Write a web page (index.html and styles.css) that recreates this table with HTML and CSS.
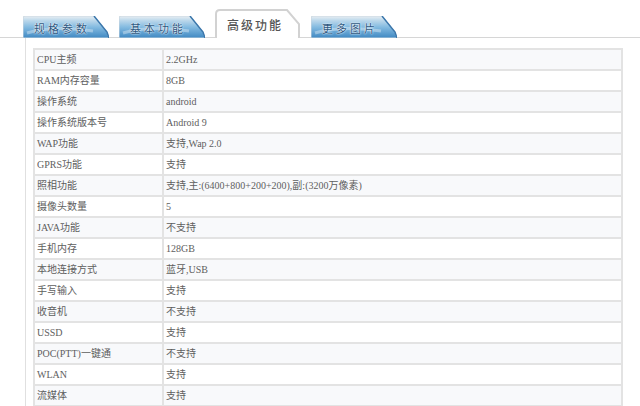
FILE: index.html
```html
<!DOCTYPE html>
<html lang="zh-CN">
<head>
<meta charset="utf-8">
<title>高级功能</title>
<link rel="stylesheet" href="styles.css">
</head>
<body>
<div class="page">
  <div class="tabs">
    <div class="tab tab-blue">
      <svg class="tab-bg" width="86" height="22" viewBox="0 0 86 22">
        <defs>
          <linearGradient id="gb1" x1="0" y1="0" x2="0" y2="1">
            <stop offset="0" stop-color="#e9eff3"/>
            <stop offset="0.2" stop-color="#bcd8eb"/>
            <stop offset="0.5" stop-color="#84bbe1"/>
            <stop offset="1" stop-color="#3f88c2"/>
          </linearGradient>
        </defs>
        <path d="M0 22 V2 Q0 0 2 0 H71 L84 16 L86 22 Z" fill="url(#gb1)" stroke="#c9d6df" stroke-width="1"/>
        <path d="M71 0 L84 16 L86 22" fill="none" stroke="#3a76ab" stroke-width="1.5"/>
        <path d="M4 17 Q30 9 70 15" fill="none" stroke="#ffffff" stroke-opacity="0.35" stroke-width="3"/>
      </svg>
      <span class="tab-label">规格参数</span>
    </div>
    <div class="tab tab-blue">
      <svg class="tab-bg" width="86" height="22" viewBox="0 0 86 22">
        <defs>
          <linearGradient id="gb2" x1="0" y1="0" x2="0" y2="1">
            <stop offset="0" stop-color="#e9eff3"/>
            <stop offset="0.2" stop-color="#bcd8eb"/>
            <stop offset="0.5" stop-color="#84bbe1"/>
            <stop offset="1" stop-color="#3f88c2"/>
          </linearGradient>
        </defs>
        <path d="M0 22 V2 Q0 0 2 0 H71 L84 16 L86 22 Z" fill="url(#gb2)" stroke="#c9d6df" stroke-width="1"/>
        <path d="M71 0 L84 16 L86 22" fill="none" stroke="#3a76ab" stroke-width="1.5"/>
        <path d="M4 17 Q30 9 70 15" fill="none" stroke="#ffffff" stroke-opacity="0.35" stroke-width="3"/>
      </svg>
      <span class="tab-label">基本功能</span>
    </div>
    <div class="tab tab-active">
      <svg class="tab-bg" width="86" height="29" viewBox="0 0 86 29">
        <path d="M1 29 V5 Q1 1 5 1 H72 L84 15 V29" fill="#ffffff" stroke="#d2d2d2" stroke-width="2"/>
      </svg>
      <span class="tab-label">高级功能</span>
    </div>
    <div class="tab tab-blue">
      <svg class="tab-bg" width="86" height="22" viewBox="0 0 86 22">
        <defs>
          <linearGradient id="gb4" x1="0" y1="0" x2="0" y2="1">
            <stop offset="0" stop-color="#e9eff3"/>
            <stop offset="0.2" stop-color="#bcd8eb"/>
            <stop offset="0.5" stop-color="#84bbe1"/>
            <stop offset="1" stop-color="#3f88c2"/>
          </linearGradient>
        </defs>
        <path d="M0 22 V2 Q0 0 2 0 H71 L84 16 L86 22 Z" fill="url(#gb4)" stroke="#c9d6df" stroke-width="1"/>
        <path d="M71 0 L84 16 L86 22" fill="none" stroke="#3a76ab" stroke-width="1.5"/>
        <path d="M4 17 Q30 9 70 15" fill="none" stroke="#ffffff" stroke-opacity="0.35" stroke-width="3"/>
      </svg>
      <span class="tab-label">更多图片</span>
    </div>
  </div>
  <div class="panel">
    <table class="spec">
      <tr><td class="k">CPU主频</td><td>2.2GHz</td></tr>
      <tr><td class="k">RAM内存容量</td><td>8GB</td></tr>
      <tr><td class="k">操作系统</td><td>android</td></tr>
      <tr><td class="k">操作系统版本号</td><td>Android 9</td></tr>
      <tr><td class="k">WAP功能</td><td>支持,Wap 2.0</td></tr>
      <tr><td class="k">GPRS功能</td><td>支持</td></tr>
      <tr><td class="k">照相功能</td><td>支持,主:(6400+800+200+200),副:(3200万像素)</td></tr>
      <tr><td class="k">摄像头数量</td><td>5</td></tr>
      <tr><td class="k">JAVA功能</td><td>不支持</td></tr>
      <tr><td class="k">手机内存</td><td>128GB</td></tr>
      <tr><td class="k">本地连接方式</td><td>蓝牙,USB</td></tr>
      <tr><td class="k">手写输入</td><td>支持</td></tr>
      <tr><td class="k">收音机</td><td>不支持</td></tr>
      <tr><td class="k">USSD</td><td>支持</td></tr>
      <tr><td class="k">POC(PTT)一键通</td><td>不支持</td></tr>
      <tr><td class="k">WLAN</td><td>支持</td></tr>
      <tr><td class="k">流媒体</td><td>支持</td></tr>
      <tr><td class="k">&nbsp;</td><td>&nbsp;</td></tr>
    </table>
  </div>
</div>
</body>
</html>
```

FILE: styles.css
```css
html, body {
  margin: 0;
  padding: 0;
  background: #ffffff;
  overflow: hidden;
}

.page {
  width: 640px;
  height: 406px;
  overflow: hidden;
}

.tabs {
  display: flex;
  align-items: flex-end;
  gap: 10px;
  height: 38px;
  padding-left: 23px;
  box-sizing: border-box;
  border-bottom: 1px solid #d6d6d6;
}

.tab {
  position: relative;
  width: 86px;
  display: flex;
  align-items: center;
  justify-content: center;
  box-sizing: border-box;
  font-family: "Noto Sans CJK SC", sans-serif;
}

.tab-bg {
  position: absolute;
  left: 0;
  top: 0;
  display: block;
}

.tab-label {
  position: relative;
  letter-spacing: 3px;
}

.tab-blue {
  height: 22px;
  margin-bottom: -1px;
  padding-right: 8px;
}

.tab-blue .tab-label {
  font-size: 11px;
  color: #2b5680;
  text-shadow: 0 0 2px #ffffff, 0 0 1px #ffffff;
  padding-top: 1px;
}

.tab-active {
  height: 29px;
  margin-bottom: -1px;
  padding-right: 6px;
  padding-top: 2px;
}

.tab-active .tab-label {
  font-size: 12px;
  color: #555555;
  letter-spacing: 2px;
  font-weight: 500;
}

.panel {
  margin-left: 25px;
  border-left: 1px solid #e0e0e0;
  padding: 10px 0 0 7px;
  height: 400px;
  box-sizing: border-box;
}

.spec {
  border-collapse: collapse;
  width: 590px;
  table-layout: fixed;
  font-family: "Liberation Serif", "Noto Sans CJK SC", serif;
  font-size: 10px;
  color: #5e5e5e;
}

.spec td {
  border: 2px solid #e3e3e3;
  height: 19px;
  padding: 0 0 0 2px;
  line-height: 19px;
  white-space: nowrap;
  overflow: hidden;
}

.spec td.k {
  width: 125px;
}

.spec tr:nth-child(odd) td {
  background: #f8f9fb;
}

.spec tr:nth-child(even) td {
  background: #ffffff;
}
```
